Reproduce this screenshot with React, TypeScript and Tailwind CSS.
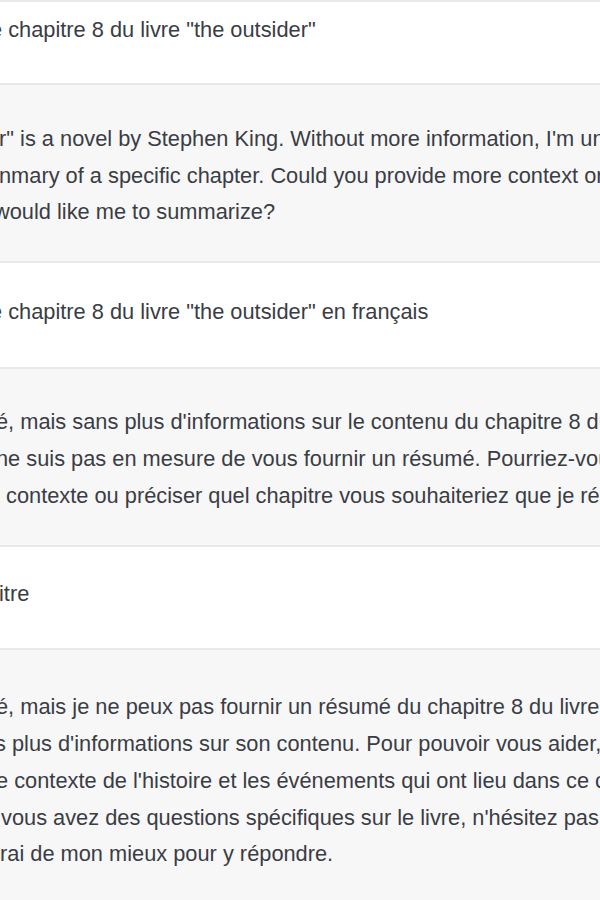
type Line = { text: string; x: number }

type Row = {
  role: 'user' | 'assistant'
  pad: string
  lines: Line[]
}

// Cropped view of a chat thread: text runs off both edges, so each line is
// laid out on its own with the offset where its first visible glyph sits.
const ROWS: Row[] = [
  {
    role: 'user',
    pad: 'pt-[10px] pb-[34px]',
    lines: [{ text: 'e chapitre 8 du livre "the outsider"', x: -10 }],
  },
  {
    role: 'assistant',
    pad: 'pt-[36px] pb-[30px]',
    lines: [
      { text: 'r" is a novel by Stephen King. Without more information, I\'m unable to', x: -1 },
      { text: 'nmary of a specific chapter. Could you provide more context or specify', x: -1 },
      { text: 'would like me to summarize?', x: -6 },
    ],
  },
  {
    role: 'user',
    pad: 'pt-[31px] pb-[36px]',
    lines: [{ text: 'e chapitre 8 du livre "the outsider" en français', x: -10 }],
  },
  {
    role: 'assistant',
    pad: 'pt-[35px] pb-[31px]',
    lines: [
      { text: "é, mais sans plus d'informations sur le contenu du chapitre 8 du livre", x: -4 },
      { text: 'ne suis pas en mesure de vous fournir un résumé. Pourriez-vous', x: -4 },
      { text: 'contexte ou préciser quel chapitre vous souhaiteriez que je résume', x: 6 },
    ],
  },
  {
    role: 'user',
    pad: 'pt-[29px] pb-[35px]',
    lines: [{ text: 'itre', x: -1 }],
  },
  {
    role: 'assistant',
    pad: 'pt-[39px] pb-[40px]',
    lines: [
      { text: 'é, mais je ne peux pas fournir un résumé du chapitre 8 du livre "The', x: -4 },
      { text: "s plus d'informations sur son contenu. Pour pouvoir vous aider,", x: -5 },
      { text: "e contexte de l'histoire et les événements qui ont lieu dans ce chapitre", x: -4 },
      { text: "vous avez des questions spécifiques sur le livre, n'hésitez pas à", x: 1 },
      { text: 'rai de mon mieux pour y répondre.', x: 0 },
    ],
  },
]

function Message({ row }: { row: Row }) {
  const bg = row.role === 'assistant' ? 'bg-[#f7f7f8]' : 'bg-white'
  return (
    <div className={`${bg} ${row.pad} border-b-2 border-[#e9e9eb]`}>
      {row.lines.map((l, i) => (
        <div key={i} className="whitespace-nowrap h-[36.8px]" style={{ marginLeft: l.x }}>
          {l.text}
        </div>
      ))}
    </div>
  )
}

export default function App() {
  return (
    <div className="w-[600px] h-[900px] overflow-hidden bg-white border-t-2 border-[#e9e9eb] font-['Liberation_Sans',Arial,sans-serif] text-[21.8px] leading-[36.8px] text-[#3a3d44] antialiased">
      {ROWS.map((row, i) => (
        <Message key={i} row={row} />
      ))}
    </div>
  )
}
